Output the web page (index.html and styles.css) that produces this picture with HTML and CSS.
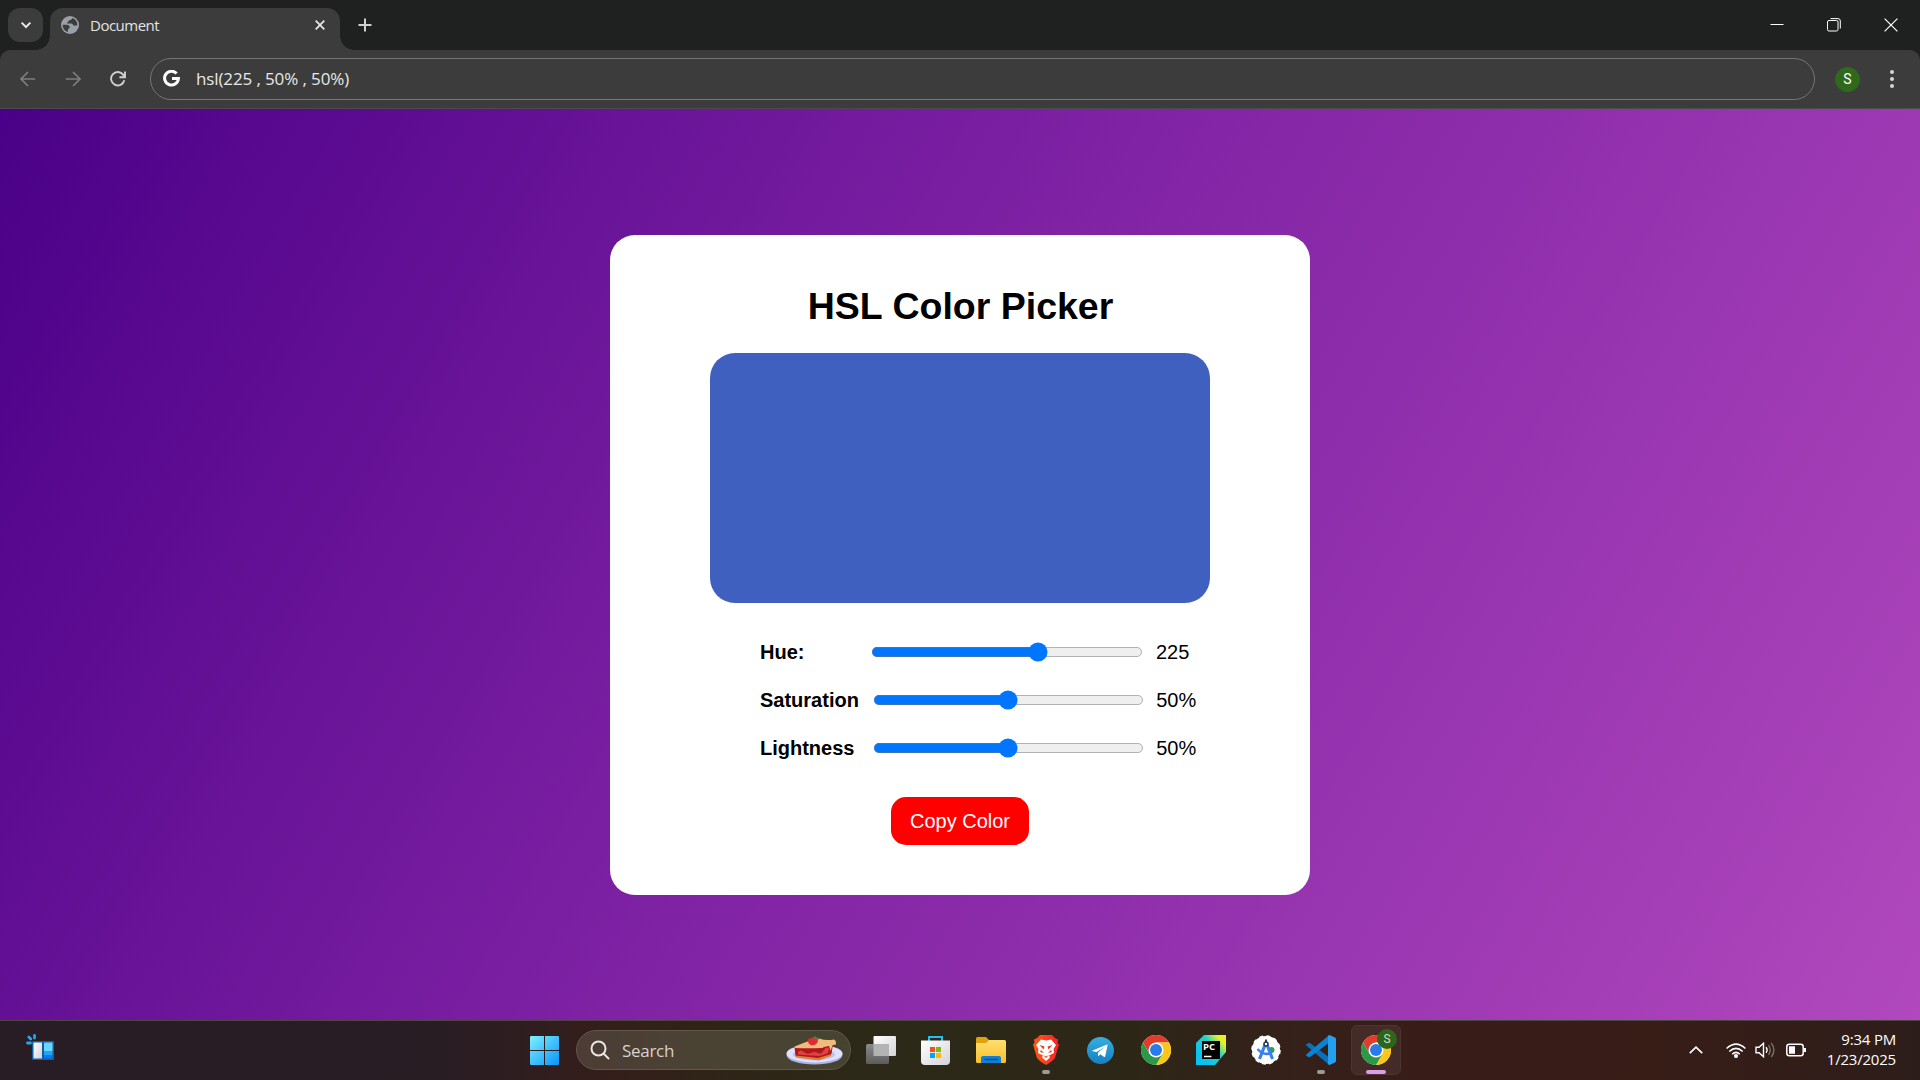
FILE: index.html
```html
<!DOCTYPE html>
<html lang="en">
<head>
<meta charset="utf-8">
<title>Document</title>
<link rel="stylesheet" href="styles.css">
</head>
<body>
<svg class="defs" width="0" height="0" aria-hidden="true">
  <defs>
    <symbol id="chrome" viewBox="0 0 48 48">
      <circle cx="24" cy="24" r="24" fill="#fff"/>
      <path d="M24 12H44.8A24 24 0 0 0 3.2 12L13.6 30z" fill="#e33b2e"/>
      <path d="M34.4 30L24 48A24 24 0 0 0 44.8 12H24z" fill="#fcc61a"/>
      <path d="M13.6 30L3.2 12A24 24 0 0 0 24 48L34.4 30z" fill="#2b9a48"/>
      <circle cx="24" cy="24" r="12" fill="#fff"/>
      <circle cx="24" cy="24" r="9.6" fill="#2a7bea"/>
    </symbol>
    <linearGradient id="win" x1="0" y1="0" x2="1" y2="1"><stop offset="0" stop-color="#7df0ff"/><stop offset="1" stop-color="#0a95fb"/></linearGradient>
    <linearGradient id="fold" x1="0" y1="0" x2="0" y2="1"><stop offset="0" stop-color="#ffdf70"/><stop offset="1" stop-color="#fbbf27"/></linearGradient>
    <linearGradient id="brave" x1="0" y1="0" x2="1" y2="0"><stop offset="0" stop-color="#ff5a12"/><stop offset="1" stop-color="#f5222a"/></linearGradient>
    <linearGradient id="tele" x1="0" y1="0" x2="0" y2="1"><stop offset="0" stop-color="#37aee2"/><stop offset="1" stop-color="#167fc0"/></linearGradient>
    <linearGradient id="pyc" x1="0.15" y1="0.75" x2="0.9" y2="0.1"><stop offset="0" stop-color="#07c3f2"/><stop offset=".55" stop-color="#21d0cb"/><stop offset=".9" stop-color="#e8f02a"/></linearGradient>
    <linearGradient id="pane" x1="0" y1="0" x2="1" y2="1"><stop offset="0" stop-color="#fff"/><stop offset="1" stop-color="#d3d3d8"/></linearGradient>
    <linearGradient id="dark" x1="0" y1="0" x2="0" y2="1"><stop offset="0" stop-color="#8a8a8a"/><stop offset="1" stop-color="#5c5c5c"/></linearGradient>
  </defs>
</svg>

<header class="tabstrip">
  <div class="tab-search">
    <svg width="12" height="8" viewBox="0 0 12 8"><path d="M1.6 1.6L6 6l4.400-4.400" fill="none" stroke="#e6e6e6" stroke-width="2"/></svg>
  </div>
  <div class="tab">
    <svg width="18" height="18" viewBox="0 0 18 18">
      <circle cx="9" cy="9" r="9" fill="#9aa0a8"/>
      <path d="M11 2C11.300 3.600 9.500 4 8.300 4.300C7.200 4.600 7.800 6 6.300 6.400C5.600 6.800 6.200 7.500 7 7.500H10.500C12 7.700 11.800 9.500 13.300 9.700C14.500 9.800 15.300 9.200 16.300 9.200A7.400 7.400 0 0 0 11 2zM1.700 8.800H5.500C7.500 9 8.800 10 8.800 11.300C8.600 12.600 6.900 12.300 7 13.600C7.100 14.800 6.800 15 6.800 16.100A7.400 7.400 0 0 1 1.700 8.800z" fill="#3c3c3c"/>
    </svg>
    <span class="tab-title">Document</span>
    <svg class="tab-close" width="10" height="10" viewBox="0 0 10 10"><path d="M.7.7l8.600 8.600M9.300.7L.7 9.300" stroke="#e6e6e6" stroke-width="1.800"/></svg>
  </div>
  <svg class="new-tab" width="14" height="14" viewBox="0 0 14 14"><path d="M7 .5v13M.5 7h13" stroke="#d0d0d0" stroke-width="2"/></svg>
  <div class="window-buttons">
    <svg width="14" height="14" viewBox="0 0 14 14"><path d="M.5 6.500h13" stroke="#fff"/></svg>
    <svg width="14" height="14" viewBox="0 0 14 14" fill="none" stroke="#fff"><rect x=".5" y="2.500" width="10.500" height="10.500" rx="1.500"/><path d="M3.500.6h7.500a2.300 2.300 0 0 1 2.300 2.300v7.600"/></svg>
    <svg width="14" height="14" viewBox="0 0 14 14"><path d="M.6.6l12.800 12.800M13.400.6L.6 13.400" stroke="#fff" stroke-width="1.200"/></svg>
  </div>
</header>

<nav class="toolbar">
  <div class="nav-buttons">
    <svg width="16" height="16" viewBox="0 0 16 16" fill="none" stroke="#7d7d7d" stroke-width="1.700"><path d="M15.200 8H1.800M8 1L1 8l7 7"/></svg>
    <svg width="16" height="16" viewBox="0 0 16 16" fill="none" stroke="#7d7d7d" stroke-width="1.700"><path d="M.8 8h13.400M8 1l7 7-7 7"/></svg>
    <svg width="16" height="16" viewBox="0 0 16 16" fill="none" stroke="#cfcfcf" stroke-width="1.900"><path d="M14.300 9.200A6.700 6.700 0 1 1 13.300 3.900L14.600 5.700M15 .5v5.700H9.400"/></svg>
  </div>
  <div class="omnibox">
    <svg width="17" height="17" viewBox="0 0 17 17"><path d="M13.600 3.500A6.900 6.900 0 1 0 15.400 8.500H9" fill="none" stroke="#fff" stroke-width="3"/></svg>
    <span>hsl(225 , 50% , 50%)</span>
  </div>
  <div class="avatar">S</div>
  <svg class="menu" width="4" height="18" viewBox="0 0 4 18" fill="#d6d6d6"><circle cx="2" cy="2" r="2"/><circle cx="2" cy="9" r="2"/><circle cx="2" cy="16" r="2"/></svg>
</nav>

<main class="page">
  <section class="card">
    <h1>HSL Color Picker</h1>
    <div class="preview"></div>
    <div class="sliders">
      <div class="row row-hue"><label>Hue:</label><input type="range" min="0" max="360" value="225"><span>225</span></div>
      <div class="row"><label>Saturation</label><input type="range" min="0" max="100" value="50"><span>50%</span></div>
      <div class="row"><label>Lightness</label><input type="range" min="0" max="100" value="50"><span>50%</span></div>
    </div>
    <button class="copy">Copy Color</button>
  </section>
</main>

<footer class="taskbar">
  <div class="widgets">
    <svg width="28" height="27" viewBox="0 0 28 27"><g stroke="#2aa5ea" stroke-width="2.800" stroke-linecap="round"><path d="M8.500 1.500v2.500M2.800 3l2 2M1.500 9h3"/></g><rect x="6" y="7" width="22" height="19" rx="1" fill="#0f5ea8"/><rect x="7.500" y="8.500" width="8.500" height="16" fill="url(#pane)"/><rect x="18" y="8.500" width="8.500" height="9" fill="#69d6ff"/><rect x="18" y="17.500" width="8.500" height="4" fill="#1fa6f5"/><rect x="18" y="21.500" width="8.500" height="3" fill="#007bea"/></svg>
  </div>
  <svg class="start" width="29" height="29" viewBox="0 0 29 29" fill="url(#win)"><path d="M1 0H14V14H0V1Q0 0 1 0zM15 0H28Q29 0 29 1V14H15zM0 15H14V29H1Q0 29 0 28zM15 15H29V28Q29 29 28 29H15z"/></svg>
  <div class="search">
    <svg width="20" height="20" viewBox="0 0 20 20" fill="none" stroke="#e9e5e2" stroke-width="2"><circle cx="8.500" cy="8.500" r="7"/><path d="M13.500 13.500l5 5" stroke-linecap="round"/></svg>
    <span>Search</span>
    <svg class="pie" width="57" height="29" viewBox="0 0 57 29">
      <ellipse cx="28.500" cy="19" rx="28" ry="9.500" fill="#a9b2e6"/><ellipse cx="28.500" cy="17.500" rx="28" ry="9" fill="#dfe2ff"/><ellipse cx="28" cy="18.500" rx="21" ry="6" fill="#bcc3ef"/>
      <path d="M9 18.500L32 21 45 17V20L33 24.500 10 21.500z" fill="#d98235"/>
      <path d="M8.500 11L34 12 47 8 45.500 18 32 22 9.500 19.500z" fill="#b4151c"/>
      <path d="M12 16q3-3 6 0t7 1 7 0 6-3 5-1l-1 4q-4 2-9 3L12 18.500z" fill="#dc4441"/>
      <path d="M8.500 10.500Q17 7 23 5L33 2.500Q40 5 48 3.500Q51 5 49.500 9Q46 8 46 11L44.500 15 43 10Q39 10 36 12Q20 12.500 9 12z" fill="#efbd79"/>
      <path d="M22 5Q22 1.500 26 2Q31 1 32 5Q31 9 26 9.500Q22 8 22 5z" fill="#e02b36"/><path d="M26 2l3-2 3 2 1 2-4-1z" fill="#58793a"/>
    </svg>
  </div>
  <div class="apps">
    <div class="app"><svg width="30" height="28" viewBox="0 0 30 28"><rect x="7.500" width="22.500" height="20" rx="1" fill="url(#pane)"/><rect y="8" width="23" height="20" rx="1.500" fill="url(#dark)"/><path d="M7.500 8H23V20H7.500z" fill="#b3b3b3"/></svg></div>
    <div class="app"><svg width="30" height="29" viewBox="0 0 30 29"><path d="M8 6V1h13v5" fill="none" stroke="#22bff4" stroke-width="2"/><path d="M0 4.500H29V25a4 4 0 0 1-4 4H4a4 4 0 0 1-4-4z" fill="url(#pane)"/><path d="M9 11h5v5H9z" fill="#f25022"/><path d="M15 11h5v5h-5z" fill="#7fba00"/><path d="M9 17h5v5H9z" fill="#00a4ef"/><path d="M15 17h5v5h-5z" fill="#ffb900"/></svg></div>
    <div class="app"><svg width="30" height="28" viewBox="0 0 30 28"><path d="M0 2.500Q0 1 1.500 1H10L13 4V9H0z" fill="#e0a20c"/><path d="M0 7H10L13 4H28.500Q30 4 30 5.500V25.500Q30 27 28.500 27H1.500Q0 27 0 25.500z" fill="url(#fold)"/><path d="M5 27V22Q5 20 7 20H23Q25 20 25 22V27z" fill="#117fd6"/><path d="M8.500 23.500h13" stroke="#0c4c91" stroke-width="1.500"/></svg></div>
    <div class="app running"><svg width="26" height="30" viewBox="0 0 26 30"><path d="M7 0H19L22 3 25 4.500 24.500 8 26 9.500 22 23Q20 26 13 30 6 26 4 23L0 9.500 1.500 8 1 4.500 4 3z" fill="url(#brave)"/><path d="M8 4.500L13 5.500 18 4.500 23 10 20.500 14 21 18 16 20.500 17 22.500 13 26 9 22.500 10 20.500 5 18 5.500 14 3 10z" fill="#fff"/><path d="M6.500 10l5 1.500-1 3zM19.500 10l-5 1.500 1 3zM8 15l3 3-4-1zM18 15l-3 3 4-1zM10 20l3 1.500 3-1.500-3 3z" fill="#f23a20"/></svg></div>
    <div class="app"><svg width="28" height="27" viewBox="0 0 28 27"><circle cx="13.500" cy="13.500" r="13.500" fill="url(#tele)"/><path d="M5.500 13.400L20 7.600Q20.700 7.500 20.500 8.500L18.200 19.400Q17.800 20.500 16.800 19.800L13.300 17.200 11.500 19Q11 19.200 11 18.500L11.200 15.600 17.500 10 9.600 15 5.800 14.200Q5 13.800 5.500 13.400z" fill="#fff"/></svg></div>
    <div class="app"><svg width="30" height="30"><use href="#chrome"/></svg></div>
    <div class="app"><svg width="30" height="30" viewBox="0 0 30 30"><path d="M8 0H30V17L19 30H0V8z" fill="url(#pyc)"/><path d="M6 6H24V24H6z" fill="#000"/><text x="7" y="15" fill="#fff" font-size="9.500" font-weight="700" font-family="Open Sans, sans-serif">PC</text><path d="M8 21.500h7.500" stroke="#fff" stroke-width="1.500"/></svg></div>
    <div class="app"><svg width="30" height="30" viewBox="0 0 30 30"><circle cx="15" cy="15" r="14" fill="#fff"/><circle cx="15" cy="15" r="14" fill="none" stroke="#fff" stroke-width="1.500" stroke-dasharray="4 3.330"/><circle cx="20.500" cy="15" r="3" fill="#2aa14a"/><path d="M14.300 9L8.500 24M15.700 9l5.800 15" stroke="#3c80ed" stroke-width="3.200"/><path d="M6.500 14Q13 21.500 21 17.500" fill="none" stroke="#3c80ed" stroke-width="2.500"/><circle cx="15" cy="9" r="2" fill="#fff" stroke="#273849" stroke-width="1.500"/><path d="M15 4.500v3" stroke="#273849" stroke-width="2"/></svg></div>
    <div class="app running"><svg width="30" height="30" viewBox="0 0 30 30"><path d="M0 9.500L2.500 8Q3.300 7.500 4 8L24 23V29.800L22 29 .8 11Q-.3 10 0 9.500z" fill="#0a70bb"/><path d="M0 20.500L2.500 22Q3.300 22.500 4 22L24 7V.2L22 1 .8 19Q-.3 20 0 20.500z" fill="#0b83d4"/><path d="M22 .8L23.500 0 29 2.600Q30 3 30 4V26Q30 27 29 27.400L23.500 30 22 29.200z" fill="#24a0ee"/></svg></div>
    <div class="app active"><svg width="30" height="30"><use href="#chrome"/></svg><span class="badge">S</span></div>
  </div>
  <div class="tray">
    <svg class="tray-up" width="14" height="8" viewBox="0 0 14 8"><path d="M.8 7.200L7 1.200l6.200 6" fill="none" stroke="#fff" stroke-width="1.700"/></svg>
    <svg class="tray-wifi" width="20" height="15" viewBox="0 0 20 15" fill="none" stroke="#fff" stroke-width="1.500"><path d="M.6 5.500Q10-3.200 19.400 5.500M3.300 8.500Q10 2.200 16.700 8.500M6.200 11.200Q10 7.500 13.800 11.200"/><circle cx="10" cy="13" r="1.300" fill="#fff"/></svg>
    <svg class="tray-sound" width="21" height="16" viewBox="0 0 21 16" fill="none" stroke="#fff" stroke-width="1.400"><path d="M1 5.300H4L8.500 1.300V14.700L4 10.700H1zM11 5.200Q13.200 8 11 10.800"/><path d="M13.500 3.200Q17 8 13.500 12.800M16.300 1Q21.500 8 16.300 15" stroke="#77706e"/></svg>
    <svg class="tray-battery" width="20" height="14" viewBox="0 0 20 14"><rect x=".8" y="1.300" width="16.400" height="11.400" rx="2.500" fill="none" stroke="#fff" stroke-width="1.500"/><path d="M3 3.300h6v7.400H3zM18 5h2v4h-2z" fill="#fff"/></svg>
    <div class="clock"><span>9:34 PM</span><span>1/23/2025</span></div>
  </div>
</footer>
</body>
</html>
```
FILE: styles.css
```css
* { box-sizing: border-box; }
body {
  margin: 0;
  width: 1920px;
  height: 1080px;
  overflow: hidden;
  display: flex;
  flex-direction: column;
  background: #1f2120;
  font-family: "Open Sans", "Noto Sans", sans-serif;
}
svg { display: block; flex: none; }
.defs { position: absolute; }

/* Browser tab strip */
.tabstrip {
  height: 50px;
  flex: none;
  display: flex;
  align-items: flex-start;
  padding: 8px 0 0 8px;
}
.tab-search {
  width: 35px;
  height: 34px;
  border-radius: 12px;
  background: #3c3c3c;
  display: flex;
  align-items: center;
  justify-content: center;
}
.tab {
  position: relative;
  width: 290px;
  height: 42px;
  margin-left: 7px;
  padding: 0 15px 9px 11px;
  border-radius: 13px 13px 0 0;
  background: #3c3c3c;
  display: flex;
  align-items: center;
}
.tab::before, .tab::after {
  content: "";
  position: absolute;
  bottom: 0;
  width: 14px;
  height: 14px;
}
.tab::before { left: -14px; background: radial-gradient(circle at 0 0, transparent 13.500px, #3c3c3c 14px); }
.tab::after { right: -14px; background: radial-gradient(circle at 100% 0, transparent 13.500px, #3c3c3c 14px); }
.tab-title {
  margin-left: 11px;
  font-size: 15px;
  letter-spacing: -0.500px;
  color: #e3e3e3;
}
.tab-close { margin-left: auto; }
.new-tab { margin: 10px 0 0 18px; }
.window-buttons {
  margin: 10px 22px 0 auto;
  display: flex;
  gap: 43px;
}

/* Address bar */
.toolbar {
  height: 59px;
  flex: none;
  display: flex;
  align-items: center;
  padding: 0 26px 0 20px;
  border-radius: 10px 10px 0 0;
  border-bottom: 1px solid #4c4a4c;
  background: #3c3c3c;
}
.nav-buttons { display: flex; gap: 29px; width: 130px; }
.omnibox {
  width: 1665px;
  height: 42px;
  border: 1px solid #757575;
  border-radius: 21px;
  padding: 0 0 1px 12px;
  display: flex;
  align-items: center;
  gap: 16px;
  color: #e8e8e8;
  font-size: 17px;
  letter-spacing: -0.120px;
}
.avatar {
  width: 25px;
  height: 25px;
  margin-left: 20px;
  border-radius: 50%;
  background: #30691c;
  color: #fff;
  font: 14px/25px Roboto, sans-serif;
  text-align: center;
}
.menu { margin-left: auto; }

/* Page content */
.page {
  height: 911px;
  flex: none;
  display: flex;
  align-items: center;
  justify-content: center;
  background: linear-gradient(120deg, #4a0088, #7b1fa2 42%, #b148bd);
  font-family: "Liberation Sans", Arial, sans-serif;
  color: #000;
}
.card {
  width: 700px;
  height: 660px;
  border-radius: 25px;
  background: #fff;
  display: flex;
  flex-direction: column;
  align-items: center;
  padding-top: 48px;
}
.card h1 {
  margin: 0 0 24px;
  padding-left: 1px;
  font-size: 37.500px;
  line-height: 46px;
}
.preview {
  width: 500px;
  height: 250px;
  border-radius: 25px;
  background: hsl(225, 50%, 50%);
}
.sliders {
  width: 500px;
  padding-left: 50px;
  margin-top: 25px;
}
.row {
  height: 48px;
  display: grid;
  grid-template-columns: 112.500px 271.250px 1fr;
  align-items: center;
  font-size: 20px;
}
.row-hue { grid-template-columns: 110.500px 272.500px 1fr; }
.row label { font-weight: 700; padding-top: 1px; }
.row span { padding: 1px 0 0 12.500px; }
.row-hue span { padding-left: 13px; }
.row input {
  zoom: 1.25;
  width: 100%;
  margin: 0;
}
.copy {
  width: 138px;
  height: 48px;
  margin-top: 25px;
  border: 0;
  border-radius: 15px;
  background: #f00;
  color: #fff;
  font: 20px "Liberation Sans", Arial, sans-serif;
  padding: 1px 0 0;
}

/* Windows taskbar */
.taskbar {
  height: 60px;
  flex: none;
  display: flex;
  align-items: center;
  padding-bottom: 1px;
  border-top: 1px solid #4b463f;
  background: linear-gradient(90deg, #281d25 0, #291d24 440px, #341e1b 600px, #2e2517 740px, #2c2918 880px, #2c2717 1110px, #35201a 1300px, #381c17 1420px, #381d17 1660px, #2d1d1a 1920px);
}
.widgets { width: 530px; padding: 0 0 5px 26px; }
.search {
  width: 275px;
  height: 40px;
  margin-left: 17px;
  padding: 0 7px 0 13px;
  border: 1px solid #61584d;
  border-radius: 20px;
  background: linear-gradient(90deg, #4c3c35, #4b4234 40%, #474331);
  display: flex;
  align-items: center;
  gap: 12px;
  font-size: 17px;
  letter-spacing: -0.300px;
  color: #d8d2cc;
}
.pie { margin-left: auto; }
.apps { display: flex; gap: 5px; margin-left: 5px; }
.app {
  position: relative;
  width: 50px;
  height: 50px;
  display: flex;
  align-items: center;
  justify-content: center;
}
.app.active { background: #452b28; border-radius: 6px; border: 1px solid #4c3633; }
.running::after, .active::after {
  content: "";
  position: absolute;
  bottom: 1px;
  left: 21px;
  width: 8px;
  height: 4px;
  border-radius: 2px;
  background: #a09a97;
}
.active::after { left: 14px; bottom: 0; width: 20px; background: #dc9ee8; }
.badge {
  position: absolute;
  left: 25px;
  top: 3px;
  width: 20px;
  height: 20px;
  border-radius: 50%;
  background: #2c661c;
  color: #cfdccb;
  font: 12px/20px Roboto, sans-serif;
  text-align: center;
}
.tray {
  flex: 1;
  display: flex;
  align-items: center;
  padding: 0 24px 0 288px;
}
.tray-wifi { margin-left: 23px; }
.tray-sound { margin-left: 9px; }
.tray-battery { margin-left: 10px; }
.clock {
  margin-left: auto;
  padding-bottom: 2px;
  display: flex;
  flex-direction: column;
  text-align: right;
  font-size: 15px;
  line-height: 20px;
  letter-spacing: -0.200px;
  color: #fff;
}
```
